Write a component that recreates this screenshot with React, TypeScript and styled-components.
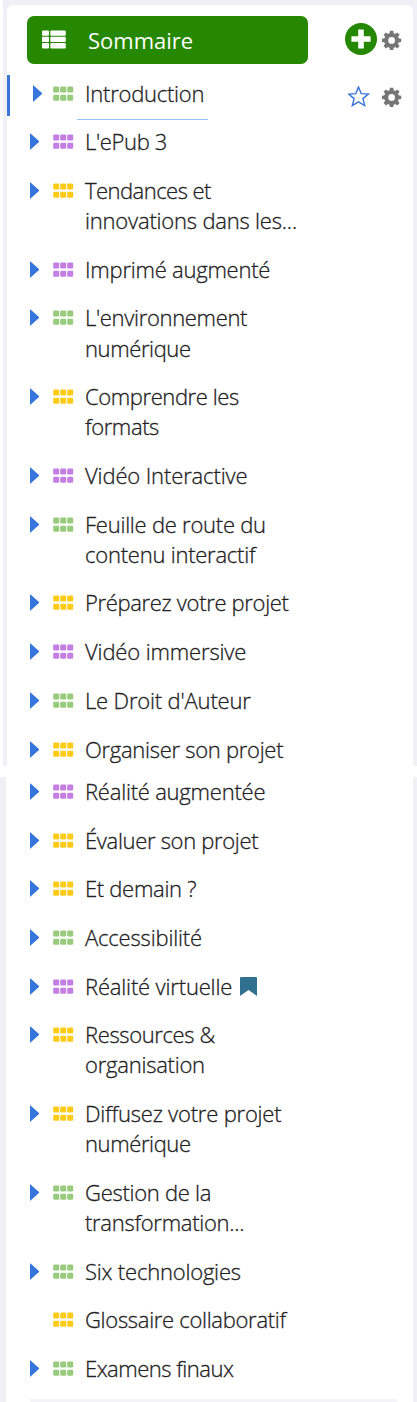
import React from "react";
import styled, { createGlobalStyle } from "styled-components";

const GlobalStyle = createGlobalStyle`
  * { box-sizing: border-box; }
  body { margin: 0; background: #fff; font-family: "Open Sans", "Noto Sans", sans-serif; color: #222; }
`;

const Page = styled.div`
  width: 417px;
  height: 1402px;
  display: flex;
  flex-direction: column;
  gap: 11px;
  overflow: hidden;
`;

const Frame = styled.section<{ $height: number; $first?: boolean }>`
  flex: none;
  height: ${(p) => p.$height}px;
  margin-left: ${(p) => (p.$first ? 3 : 0)}px;
  padding: ${(p) => (p.$first ? "5px 4px 0 4px" : "0 4px 0 6px")};
  background: #f0f0f6;
  overflow: hidden;
`;

const Panel = styled.div<{ $first?: boolean }>`
  height: 100%;
  background: #fff;
  border-radius: ${(p) => (p.$first ? "6px 6px 0 0" : "0")};
  padding-left: ${(p) => (p.$first ? 0 : 1)}px;
  overflow: hidden;
`;

const Header = styled.header`
  display: flex;
  align-items: center;
  height: 64.3px;
  padding: 11px 11px 5px 20px;
`;

const TitleButton = styled.button`
  width: 281px;
  height: 48px;
  display: flex;
  align-items: center;
  gap: 22px;
  padding: 0 0 2px 15px;
  border: 0;
  border-radius: 7px;
  background: #268800;
  color: #fff;
  font: 400 22px/30px "Open Sans", sans-serif;
`;

const Title = styled.span`
  padding-top: 2px;
`;

const HeaderActions = styled.div`
  display: flex;
  align-items: center;
  gap: 5px;
  margin-left: auto;
`;

const List = styled.ul<{ $shift?: number }>`
  list-style: none;
  margin: ${(p) => p.$shift ?? 0}px 0 0;
  padding: 0;
`;

const Row = styled.li<{ $active?: boolean }>`
  position: relative;
  display: flex;
  align-items: flex-start;
  padding: 9.3px 11px 9.3px ${(p) => (p.$active ? 26 : 23)}px;
  ${(p) => (p.$active ? "height: 48.7px;" : "")}
`;

const ActiveBar = styled.span`
  position: absolute;
  left: 0;
  top: 5.7px;
  width: 2.5px;
  height: 41px;
  background: #3a76d8;
`;

const ActiveLine = styled.span`
  position: absolute;
  left: 70px;
  top: 49.3px;
  width: 131px;
  height: 1px;
  background: #96c5fb;
`;

const Marker = styled.span<{ $width: number }>`
  flex: none;
  display: flex;
  align-items: center;
  width: ${(p) => p.$width}px;
  height: 29px;
`;

const Label = styled.div`
  flex: none;
  margin-top: -1px;
  margin-bottom: 1px;
  font-size: 22px;
  line-height: 30.1px;
  font-weight: 300;
  -webkit-text-stroke: 0.3px currentColor;
`;

const Line = styled.span<{ $spacing: number }>`
  display: flex;
  align-items: center;
  white-space: nowrap;
  letter-spacing: ${(p) => p.$spacing}px;
`;

const RowActions = styled.div`
  display: flex;
  align-items: center;
  gap: 12px;
  height: 36px;
  margin-left: auto;
`;

const BottomRule = styled.div`
  height: 3px;
  margin: 6px 16px 0 23px;
  background: #f3f3f8;
`;

const colors = { green: "#98cc7c", violet: "#c47ee3", yellow: "#fdcb18" };
type Tone = keyof typeof colors;
// Each line of a title carries its own letter spacing, in pixels.
type TextLine = [string, number];
type Item = { tone: Tone; lines: TextLine[]; active?: boolean; leaf?: boolean; bookmark?: boolean };

const firstItems: Item[] = [
  { tone: "green", lines: [["Introduction", -0.24]], active: true },
  { tone: "violet", lines: [["L'ePub 3", -0.35]] },
  { tone: "yellow", lines: [["Tendances et", -0.53], ["innovations dans les...", -0.2]] },
  { tone: "violet", lines: [["Imprimé augmenté", -0.23]] },
  { tone: "green", lines: [["L'environnement", -0.33], ["numérique", -0.4]] },
  { tone: "yellow", lines: [["Comprendre les", -0.4], ["formats", -0.4]] },
  { tone: "violet", lines: [["Vidéo Interactive", -0.13]] },
  { tone: "green", lines: [["Feuille de route du", -0.24], ["contenu interactif", -0.23]] },
  { tone: "yellow", lines: [["Préparez votre projet", -0.33]] },
  { tone: "violet", lines: [["Vidéo immersive", -0.14]] },
  { tone: "green", lines: [["Le Droit d'Auteur", -0.17]] },
  { tone: "yellow", lines: [["Organiser son projet", -0.28]] },
];

const secondItems: Item[] = [
  { tone: "violet", lines: [["Réalité augmentée", -0.22]] },
  { tone: "yellow", lines: [["Évaluer son projet", -0.32]] },
  { tone: "yellow", lines: [["Et demain ?", -0.3]] },
  { tone: "green", lines: [["Accessibilité", -0.17]] },
  { tone: "violet", lines: [["Réalité virtuelle", -0.17]], bookmark: true },
  { tone: "yellow", lines: [["Ressources &", -0.38], ["organisation", -0.23]] },
  { tone: "yellow", lines: [["Diffusez votre projet", -0.2], ["numérique", -0.4]] },
  { tone: "green", lines: [["Gestion de la", -0.28], ["transformation...", -0.28]] },
  { tone: "green", lines: [["Six technologies", -0.2]] },
  { tone: "yellow", lines: [["Glossaire collaboratif", -0.3]], leaf: true },
  { tone: "green", lines: [["Examens finaux", -0.5]] },
];

const Arrow = () => (
  <svg width="10" height="17" viewBox="0.5 0 10 17">
    <path d="M.4.5Q.4 0 1 .5L9.2 7.8Q10 8.5 9.2 9.2L1 16.5Q.4 17 .4 16.5Z" fill="#3575dc" />
  </svg>
);

const GridIcon = ({ tone }: { tone: Tone }) => (
  <svg width="21" height="15" viewBox="0 0 21 15" fill={colors[tone]}>
    {[0, 1, 2].map((c) =>
      [0, 1].map((r) => (
        <rect key={`${c}${r}`} x={0.2 + c * 7} y={0.5 + r * 8.2} width="6" height="6" rx="1.3" />
      ))
    )}
  </svg>
);

const ListIcon = () => (
  <svg width="24" height="19" viewBox="0 0 24 19" fill="#fff">
    {[0, 1, 2].map((r) => (
      <g key={r}>
        <rect x="0" y={0.5 + r * 6.3} width="7" height="5.3" rx="1" />
        <rect x="8.3" y={0.5 + r * 6.3} width="15.5" height="5.3" rx="1" />
      </g>
    ))}
  </svg>
);

const Gear = () => (
  <svg width="20" height="20" viewBox="-9.6 -10.4 20 20">
    <circle r="5.4" fill="none" stroke="#757575" strokeWidth="4" />
    {[0, 45, 90, 135, 180, 225, 270, 315].map((a) => (
      <path key={a} d="M-2.2-6.6L-1.7-9.6H1.7L2.2-6.6Z" fill="#757575" transform={`rotate(${a})`} />
    ))}
  </svg>
);

const PlusCircle = styled.svg`
  margin-top: -2px;
`;

const Star = () => (
  <svg width="22" height="22" viewBox="0.5 0.5 22 22">
    <path
      d="M11 1.4L13.7 8.1L20.9 8.6L15.4 13.1L17.2 20.1L11 16.3L4.8 20.1L6.6 13.1L1.1 8.6L8.3 8.1Z"
      fill="none"
      stroke="#3975dc"
      strokeWidth="1.4"
    />
  </svg>
);

const Bookmark = styled.svg`
  margin: 2px 0 0 8px;
`;

const Entry = ({ item }: { item: Item }) => (
  <Row $active={item.active}>
    {item.active && <ActiveBar />}
    {item.active && <ActiveLine />}
    <Marker $width={item.active ? 20 : 23}>{!item.leaf && <Arrow />}</Marker>
    <Marker $width={32}>
      <GridIcon tone={item.tone} />
    </Marker>
    <Label>
      {item.lines.map(([text, spacing]) => (
        <Line key={text} $spacing={spacing}>
          {text}
          {item.bookmark && (
            <Bookmark width="17" height="19" viewBox="0 0 17 19">
              <path d="M1 0H16Q17 0 17 1V19L8.5 13L0 19V1Q0 0 1 0Z" fill="#31708f" />
            </Bookmark>
          )}
        </Line>
      ))}
    </Label>
    {item.active && (
      <RowActions>
        <Star />
        <Gear />
      </RowActions>
    )}
  </Row>
);

export default function App() {
  return (
    <Page>
      <GlobalStyle />
      <Frame $height={766} $first>
        <Panel $first>
          <Header>
            <TitleButton>
              <ListIcon />
              <Title>Sommaire</Title>
            </TitleButton>
            <HeaderActions>
              <PlusCircle width="32" height="32" viewBox="-16 -16 32 32">
                <circle r="16" fill="#268800" />
                <path d="M-9.6-2.8H-2.8V-9.6H2.8V-2.8H9.6V2.8H2.8V9.6H-2.8V2.8H-9.6Z" fill="#fff" />
              </PlusCircle>
              <Gear />
            </HeaderActions>
          </Header>
          <List>
            {firstItems.map((item) => (
              <Entry key={item.lines[0][0]} item={item} />
            ))}
          </List>
        </Panel>
      </Frame>
      <Frame $height={625}>
        <Panel>
          <List $shift={-9.4}>
            {secondItems.map((item) => (
              <Entry key={item.lines[0][0]} item={item} />
            ))}
          </List>
          <BottomRule />
        </Panel>
      </Frame>
    </Page>
  );
}
